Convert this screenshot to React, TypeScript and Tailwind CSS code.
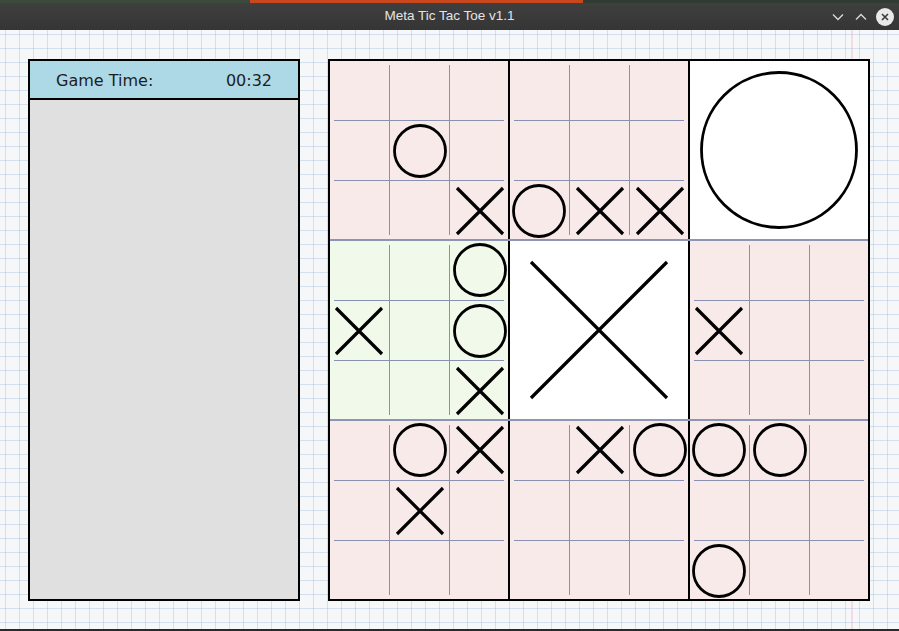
type Mark = "X" | "O" | null

type Board = {
  tone: string
  winner?: "X" | "O"
  cells: Mark[]
}

const _ = null

const boards: Board[][] = [
  [
    { tone: "bg-[#f9eaea]", cells: [_, _, _, _, "O", _, _, _, "X"] },
    { tone: "bg-[#f9eaea]", cells: [_, _, _, _, _, _, "O", "X", "X"] },
    { tone: "bg-white", winner: "O", cells: [] },
  ],
  [
    { tone: "bg-[#f1f9ea]", cells: [_, _, "O", "X", _, "O", _, _, "X"] },
    { tone: "bg-white", winner: "X", cells: [] },
    { tone: "bg-[#f9eaea]", cells: [_, _, _, "X", _, _, _, _, _] },
  ],
  [
    { tone: "bg-[#f9eaea]", cells: [_, "O", "X", _, "X", _, _, _, _] },
    { tone: "bg-[#f9eaea]", cells: [_, "X", "O", _, _, _, _, _, _] },
    { tone: "bg-[#f9eaea]", cells: ["O", "O", _, _, _, _, "O", _, _] },
  ],
]

// marks sit on the original 60px cells, so the outer cells push them outward
const colAlign = ["justify-end", "justify-center", "justify-start"]
const rowAlign = ["items-end", "items-center", "items-start"]

function SmallMark({ mark }: { mark: Mark }) {
  if (mark === "O") {
    return (
      <svg width={60} height={60} viewBox="0 0 60 60" className="shrink-0">
        <circle cx="30" cy="30" r="25.5" fill="none" stroke="#000" strokeWidth="2.8" />
      </svg>
    )
  }
  if (mark === "X") {
    return (
      <svg width={60} height={60} viewBox="0 0 60 60" className="shrink-0">
        <path d="M7 7 L53 53 M53 7 L7 53" stroke="#000" strokeWidth="3.2" />
      </svg>
    )
  }
  return null
}

function BigMark({ mark }: { mark: "X" | "O" }) {
  return (
    <svg width={178} height={178} viewBox="0 0 178 178">
      {mark === "O" ? (
        <circle cx="89" cy="89" r="77.5" fill="none" stroke="#000" strokeWidth="2.8" />
      ) : (
        <path d="M21 21 L157 157 M157 21 L21 157" stroke="#000" strokeWidth="3.2" />
      )}
    </svg>
  )
}

function SubBoard({ board }: { board: Board }) {
  if (board.winner) {
    return (
      <div className={`w-[178px] h-[178px] ${board.tone} flex items-center justify-center`}>
        <BigMark mark={board.winner} />
      </div>
    )
  }
  return (
    <div className={`w-[178px] h-[178px] ${board.tone} p-[4px]`}>
      <div className="grid grid-cols-[55px_59px_54px] grid-rows-[55px_59px_54px] gap-px bg-[#8a90b2]">
        {board.cells.map((mark, i) => (
          <div
            key={i}
            className={`${board.tone} flex overflow-visible ${colAlign[i % 3]} ${rowAlign[Math.floor(i / 3)]}`}
          >
            <SmallMark mark={mark} />
          </div>
        ))}
      </div>
    </div>
  )
}

function TitleBar() {
  return (
    <div className="h-[27px] grid grid-cols-[1fr_auto_1fr] items-center bg-gradient-to-b from-[#3f3f3f] to-[#353535]">
      <div />
      <div className="text-[13.5px] text-[#e4e4e4] font-['Liberation_Sans',sans-serif]">
        Meta Tic Tac Toe v1.1
      </div>
      <div className="flex items-center justify-end pr-[5px]">
        <svg width={12} height={8} viewBox="0 0 12 8" className="mr-[11px]">
          <polyline points="1,1.5 6,6.5 11,1.5" fill="none" stroke="#d8d8d8" strokeWidth="1.4" />
        </svg>
        <svg width={12} height={8} viewBox="0 0 12 8" className="mr-[9px]">
          <polyline points="1,6.5 6,1.5 11,6.5" fill="none" stroke="#d8d8d8" strokeWidth="1.4" />
        </svg>
        <div className="w-[18px] h-[18px] rounded-full bg-[#e9e9e9] flex items-center justify-center">
          <svg width={10} height={10} viewBox="0 0 10 10">
            <path d="M2 2 L8 8 M8 2 L2 8" stroke="#3a3a3a" strokeWidth="1.6" />
          </svg>
        </div>
      </div>
    </div>
  )
}

export default function App() {
  return (
    <div className="w-[899px] h-[631px] flex flex-col bg-[#2a2f2a] overflow-hidden">
      {/* desktop peeking above the window */}
      <div className="h-[3px] flex">
        <div className="w-[250px] bg-[#3b4a3a]" />
        <div className="w-[333px] bg-[#c9471c]" />
        <div className="flex-1 bg-[#2f3b33]" />
      </div>

      <TitleBar />

      <div className="h-[599px] flex gap-[28px] pl-[28px] pt-[29px] bg-[#f5f7f9] [background-image:linear-gradient(to_right,transparent_851px,rgba(235,160,170,0.3)_851px,rgba(235,160,170,0.3)_853px,transparent_853px),linear-gradient(to_right,rgba(150,180,215,0.35)_1px,transparent_1px),linear-gradient(to_bottom,rgba(150,180,215,0.35)_1px,transparent_1px)] [background-size:100%_100%,14px_14px,14px_14px] [background-position:0_0,5px_0,0_4px]">
        <div className="w-[272px] h-[542px] border-2 border-black bg-[#e0e0e0] flex flex-col">
          <div className="h-[39px] bg-[#add8e6] border-b-2 border-black flex items-center justify-between pl-[26px] pr-[26px] pt-[3px] text-[16px] text-[#1e1e1e] font-['DejaVu_Sans',sans-serif]">
            <span>Game Time:</span>
            <span>00:32</span>
          </div>
        </div>

        <div className="border-2 border-black self-start">
          <div className="flex flex-col gap-[2px] bg-[#8e94b4]">
            {boards.map((row, r) => (
              <div key={r} className="flex gap-[2px] bg-black">
                {row.map((board, c) => (
                  <SubBoard key={c} board={board} />
                ))}
              </div>
            ))}
          </div>
        </div>
      </div>

      <div className="h-[2px] bg-[#2a2a2a]" />
    </div>
  )
}
